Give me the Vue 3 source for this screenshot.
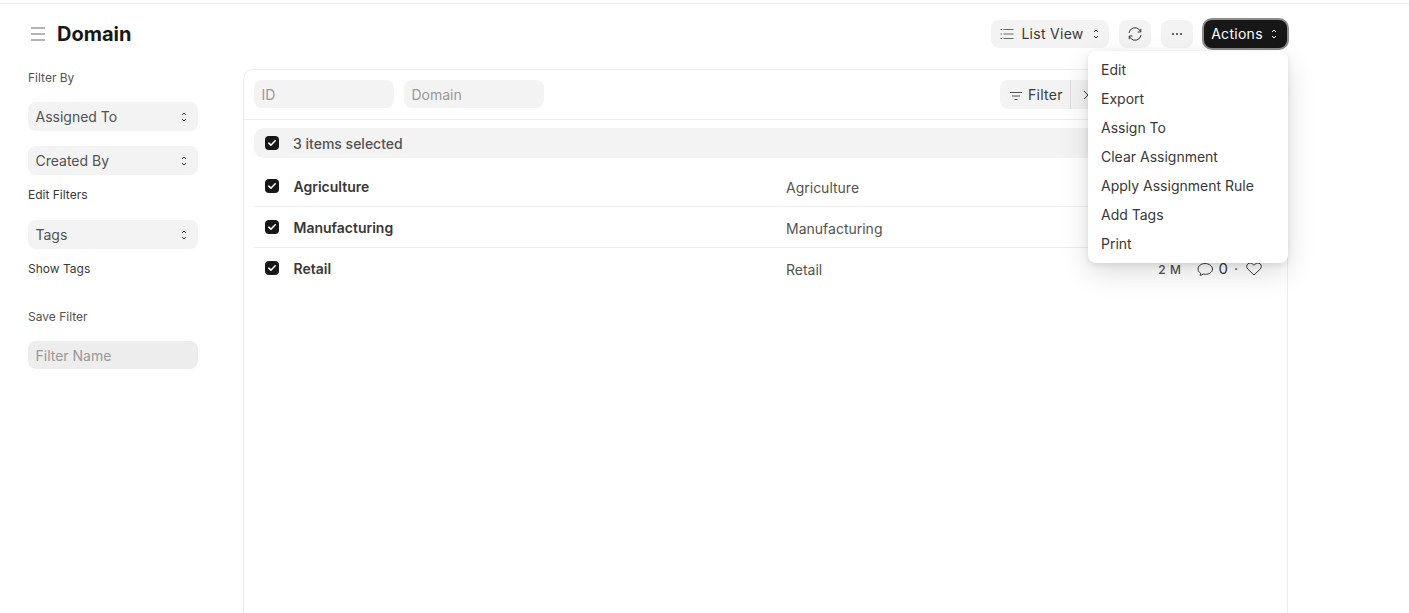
<script setup>
const rows = [
  { name: 'Agriculture', meta: false },
  { name: 'Manufacturing', meta: false },
  { name: 'Retail', meta: true },
]
const actions = ['Edit', 'Export', 'Assign To', 'Clear Assignment', 'Apply Assignment Rule', 'Add Tags', 'Print']
const sideSelects = ['Assigned To', 'Created By']
</script>

<template>
  <div class="page">
    <div class="topline"></div>
    <header class="head">
      <div class="title-wrap">
        <svg class="menu-ic" width="16" height="14" viewBox="0 0 16 14" fill="none" stroke="#6b6b6b" stroke-width="1.1">
          <path d="M1 1h14M1 7h14M1 13h14" />
        </svg>
        <h1 class="title">Domain</h1>
      </div>
      <div class="head-actions">
        <button class="btn listview">
          <svg width="14" height="12" viewBox="0 0 14 12" fill="none" stroke="#6b6b6b" stroke-width="1">
            <path d="M3.500 1.500h10M3.500 6h10M3.500 10.500h10" />
            <path d="M.5 1.500h1.500M.5 6h1.500M.5 10.500h1.500" />
          </svg>
          <span>List View</span>
          <svg class="updown" width="8" height="12" viewBox="0 0 8 12" fill="none" stroke="#383838" stroke-width="1">
            <path d="M2 4l2-2 2 2M2 8l2 2 2-2" />
          </svg>
        </button>
        <button class="btn icon">
          <svg width="16" height="16" viewBox="0 0 16 16" fill="none" stroke="#383838" stroke-width="1">
            <path d="M2 7A6 6 0 0 1 12.500 3.800L13.500 5.500" />
            <path d="M14 9A6 6 0 0 1 3.500 12.200L2.500 10.500" />
            <path d="M13.800 2.800v3.200h-3.200M2.200 13.200v-3.200h3.200" />
          </svg>
        </button>
        <button class="btn icon">
          <svg width="12" height="4" viewBox="0 0 12 4" fill="#383838">
            <circle cx="2" cy="2" r="1" /><circle cx="6" cy="2" r="1" /><circle cx="10" cy="2" r="1" />
          </svg>
        </button>
        <button class="btn primary">
          <span>Actions</span>
          <svg class="updown" width="8" height="12" viewBox="0 0 8 12" fill="none" stroke="#fff" stroke-width="1">
            <path d="M2 4l2-2 2 2M2 8l2 2 2-2" />
          </svg>
        </button>
        <ul class="menu">
          <li v-for="a in actions" :key="a">{{ a }}</li>
        </ul>
      </div>
    </header>

    <div class="body">
      <aside class="side">
        <div class="side-label first">Filter By</div>
        <div v-for="s in sideSelects" :key="s" class="side-select">
          <span>{{ s }}</span>
          <svg width="8" height="12" viewBox="0 0 8 12" fill="none" stroke="#383838" stroke-width="1">
            <path d="M2 4l2-2 2 2M2 8l2 2 2-2" />
          </svg>
        </div>
        <div class="side-link edit">Edit Filters</div>
        <div class="side-select tags">
          <span>Tags</span>
          <svg width="8" height="12" viewBox="0 0 8 12" fill="none" stroke="#383838" stroke-width="1">
            <path d="M2 4l2-2 2 2M2 8l2 2 2-2" />
          </svg>
        </div>
        <div class="side-link show">Show Tags</div>
        <div class="side-label save">Save Filter</div>
        <div class="filter-name">Filter Name</div>
      </aside>

      <main class="panel">
        <div class="filters">
          <div class="field">ID</div>
          <div class="field">Domain</div>
          <div class="filter-group">
            <div class="fbtn">
              <svg class="f-ic" width="14" height="10" viewBox="0 0 14 10" fill="none" stroke="#525252" stroke-width="1">
                <path d="M1 1.500h12M3 5h8M5.500 8.500h3" />
              </svg>
              <span>Filter</span>
            </div>
            <div class="fclear">
              <svg width="10" height="10" viewBox="0 0 10 10" fill="none" stroke="#383838" stroke-width="1">
                <path d="M1 1l8 8M9 1l-8 8" />
              </svg>
            </div>
          </div>
        </div>
        <div class="list">
          <div class="selected">
            <span class="check">
              <svg width="10" height="8" viewBox="0 0 10 8" fill="none" stroke="#fff" stroke-width="1.600" stroke-linecap="round" stroke-linejoin="round">
                <path d="M1.800 4.200l2.100 2 4.300-4.400" />
              </svg>
            </span>
            <span class="sel-text">3 items selected</span>
          </div>
          <div v-for="r in rows" :key="r.name" class="row">
            <span class="check">
              <svg width="10" height="8" viewBox="0 0 10 8" fill="none" stroke="#fff" stroke-width="1.600" stroke-linecap="round" stroke-linejoin="round">
                <path d="M1.800 4.200l2.100 2 4.300-4.400" />
              </svg>
            </span>
            <span class="row-name">{{ r.name }}</span>
            <span class="row-domain">{{ r.name }}</span>
            <span v-if="r.meta" class="row-meta">
              <span class="age">2 M</span>
              <svg class="comment" width="17" height="16" viewBox="0 0 17 16" fill="none" stroke="#383838" stroke-width="1">
                <path d="M3.600 12.200C1.900 11.100 1 9.700 1 8c0-3 3.100-5.500 7-5.500S15.500 5 15.500 8 12.300 13.300 8.500 13.300c-.8 0-1.500-.1-2.200-.3-.9.700-2 1.200-3.300 1.300.4-.6.600-1.300.6-2.100z" />
              </svg>
              <span class="count">0</span>
              <span class="dot">·</span>
              <svg class="heart" width="16" height="14" viewBox="0 0 16 14" fill="none" stroke="#383838" stroke-width="1">
                <path d="M8 13L1.900 7.200C.3 5.600.3 3.200 1.800 1.900c1.500-1.300 3.900-1.100 5.300.4l.9 1 .9-1c1.400-1.500 3.800-1.700 5.300-.4 1.500 1.300 1.500 3.700-.1 5.300L8 13z" />
              </svg>
            </span>
          </div>
        </div>
      </main>
    </div>
  </div>
</template>

<style scoped>
.page {
  width: 1409px;
  height: 613px;
  overflow: hidden;
  background: #fff;
  font-family: Inter, "Liberation Sans", sans-serif;
  color: #383838;
  position: relative;
}
.topline {
  height: 3px;
  border-bottom: 1px solid #ededed;
}
.head {
  display: flex;
  justify-content: space-between;
  align-items: center;
  height: 60px;
  padding: 0 120px 0 30px;
  box-sizing: border-box;
}
.title-wrap {
  display: flex;
  align-items: center;
  gap: 11px;
}
.menu-ic { display: block; }
.title {
  margin: 0;
  font-size: 20px;
  line-height: 28px;
  font-weight: 700;
  color: #171717;
}
.head-actions {
  display: flex;
  align-items: center;
  gap: 10px;
  position: relative;
}
.btn {
  height: 28px;
  border: 0;
  border-radius: 8px;
  background: #f3f3f3;
  color: #383838;
  font: 400 14px/20px Inter, "Liberation Sans", sans-serif;
  letter-spacing: .02em;
  display: flex;
  align-items: center;
  justify-content: center;
  padding: 0;
}
.listview { width: 118px; gap: 7px; }
.listview .updown { margin-left: 1px; }
.icon { width: 32px; }
.primary {
  width: 83px;
  margin-left: 1px;
  margin-right: 2px;
  padding-right: 2px;
  background: #171717;
  color: #fff;
  gap: 7px;
  box-shadow: 0 0 0 2px #8c8c8c;
}
.menu {
  position: absolute;
  top: 31px;
  right: 1px;
  width: 200px;
  margin: 0;
  padding: 4px 0;
  box-sizing: border-box;
  height: 212px;
  list-style: none;
  background: #fff;
  border-radius: 8px;
  box-shadow: 0 2px 6px rgba(0,0,0,.1), 0 10px 28px rgba(0,0,0,.13);
  z-index: 5;
}
.menu li {
  height: 29px;
  line-height: 29px;
  padding-left: 13px;
  font-size: 14px;
  color: #383838;
}
.body {
  display: flex;
  padding-left: 28px;
  padding-right: 121px;
  padding-top: 5px;
}
.side {
  width: 170px;
  margin-right: 45px;
  flex: none;
  font-size: 12px;
}
.side-label { color: #525252; line-height: 16px; }
.side-label.first { margin-top: 1px; margin-bottom: 16px; }
.side-select {
  height: 29px;
  border-radius: 8px;
  background: #f3f3f3;
  display: flex;
  align-items: center;
  justify-content: space-between;
  padding: 0 10px 0 7.5px;
  margin-bottom: 15px;
  font-size: 14px;
  color: #525252;
}
.side-link { color: #383838; line-height: 16px; }
.side-link.edit { margin-top: -3px; margin-bottom: 17px; }
.side-select.tags { margin-bottom: 12px; }
.side-label.save { margin-top: 32px; margin-bottom: 16px; }
.filter-name {
  height: 28px;
  line-height: 30px;
  border-radius: 8px;
  background: #ededed;
  padding-left: 7.5px;
  font-size: 14px;
  color: #999;
}
.panel {
  flex: 1;
  min-width: 0;
  height: 560px;
  border: 1px solid #ededed;
  border-radius: 10px;
  box-sizing: border-box;
}
.filters {
  display: flex;
  align-items: flex-start;
  gap: 10px;
  height: 50px;
  padding: 10px 10px 0;
  border-bottom: 1px solid #ededed;
  box-sizing: border-box;
}
.field {
  width: 140px;
  height: 28px;
  line-height: 29px;
  border-radius: 8px;
  background: #f3f3f3;
  padding-left: 7.5px;
  box-sizing: border-box;
  font-size: 14px;
  color: #999;
}
.filter-group {
  margin-left: auto;
  height: 29px;
  display: flex;
  border-radius: 8px;
  background: #f3f3f3;
  width: 277px;
  font-size: 14px;
  letter-spacing: .02em;
}
.fbtn {
  width: 71px;
  display: flex;
  align-items: center;
  gap: 5px;
  padding-left: 9px;
  box-sizing: border-box;
  border-right: 1px solid #dcdcdc;
}
.f-ic { margin-top: 2px; }
.fclear {
  display: flex;
  align-items: center;
  padding-left: 12px;
}
.list { padding: 8px 10px 0; }
.selected {
  height: 30px;
  border-radius: 10px;
  background: #f3f3f3;
  display: flex;
  align-items: center;
  padding-left: 11px;
  margin-bottom: 8px;
}
.sel-text {
  margin-left: 14px;
  font-size: 14px;
  color: #525252;
  font-weight: 500;
}
.check {
  width: 14px;
  height: 14px;
  flex: none;
  border-radius: 4px;
  background: #171717;
  display: flex;
  align-items: center;
  justify-content: center;
}
.row {
  height: 41px;
  padding: 0 15px 0 11px;
  display: flex;
  align-items: center;
  border-bottom: 1px solid #ededed;
  box-sizing: border-box;
  font-size: 14px;
}
.row:last-child { border-bottom-color: transparent; }
.row-name {
  margin-left: 14.5px;
  width: 492.5px;
  font-weight: 600;
  color: #383838;
}
.row-domain { color: #525252; padding-top: 2px; }
.row-meta {
  margin-left: auto;
  display: flex;
  align-items: center;
  padding-top: 1px;
}
.age { font-size: 12px; font-weight: 500; letter-spacing: .05em; color: #525252; margin-right: 16px; padding-top: 2px; }
.count { margin-left: 4px; font-size: 15px; }
.dot { margin: 0 8px 0 6px; }
</style>
